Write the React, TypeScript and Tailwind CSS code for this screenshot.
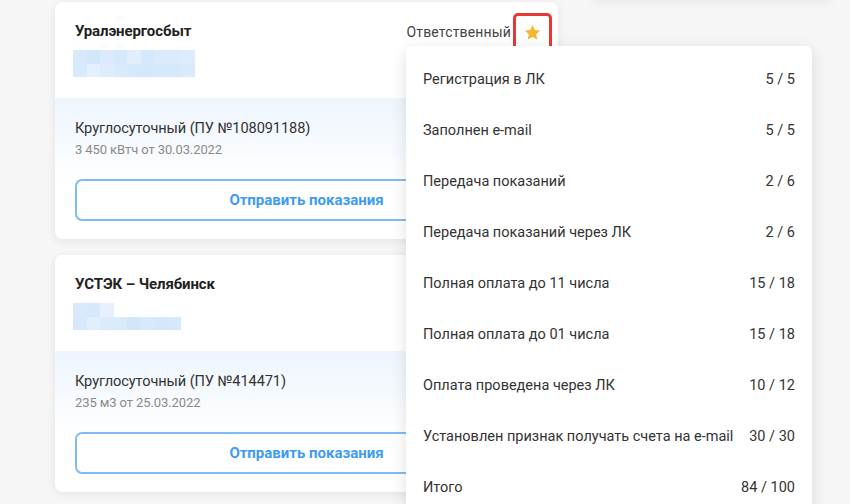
import React from "react";

const rowsCard1Top = ["#d9e9fb", "#d3e7fb", "#dbeafc", "#d6e8fc", "#e1effd", "#d5e8fc", "#dcebfc", "#dcebfc", "#deedfd"];
const rowsCard1Bottom = ["#d8e9fb", "#e3f0fd", "#deecfc", "#d9eafc", "#d5e8fc", "#d4e7fc", "#d5e8fc", "#d6e8fc", "#d9eafc"];
const rowsCard2Top = ["#d9e9fb", "#d6e8fc", "#e6f1fd"];
const rowsCard2Bottom = ["#d6e8fc", "#e1eefd", "#dcebfc", "#d9eafc", "#d2e6fb", "#d9eafc", "#d4e7fc", "#d6e8fc"];

function Pixels({ top, bottom }: { top: string[]; bottom: string[] }) {
  return (
    <div className="flex flex-col">
      <div className="flex">
        {top.map((c, i) => (
          <div key={i} className="w-[13.5px] h-[13.5px]" style={{ background: c }} />
        ))}
      </div>
      <div className="flex">
        {bottom.map((c, i) => (
          <div key={i} className="w-[13.5px] h-[13.5px]" style={{ background: c }} />
        ))}
      </div>
    </div>
  );
}

function Card({
  title,
  top,
  bottom,
  meter,
  reading,
  showResp,
}: {
  title: string;
  top: string[];
  bottom: string[];
  meter: string;
  reading: string;
  showResp?: boolean;
}) {
  return (
    <div className="w-[503px] rounded-[8px] bg-white shadow-[0_2px_10px_rgba(0,0,0,0.08)] overflow-hidden">
      <div className="flex justify-between items-start pl-5 pr-[6px]">
        <div className="pt-[19px] pb-[21px]">
          <div className="text-[15px] leading-5 font-bold text-[#222] tracking-[-0.1px]">{title}</div>
          <div className="mt-[9px] -ml-[2px]">
            <Pixels top={top} bottom={bottom} />
          </div>
        </div>
        {showResp && (
          <div className="pt-[11px] flex items-center gap-[2px]">
            <span className="text-[14px] text-[#444] leading-5 tracking-[0.15px]">Ответственный</span>
            <div className="w-[39px] h-[38px] rounded-[5px] border-[3px] border-[#e53935] flex items-center justify-center">
              <svg width="19" height="19" viewBox="0 0 24 24">
                <path
                  d="M12 2.5l2.9 6.2 6.8.8-5 4.7 1.3 6.7L12 17.6l-6 3.3 1.3-6.7-5-4.7 6.8-.8z"
                  fill="#f5b731"
                />
              </svg>
            </div>
          </div>
        )}
      </div>
      <div className="px-5 pt-5 pb-[18px] bg-gradient-to-b from-[#edf5fd] via-white via-60% to-white">
        <div className="text-[14.6px] leading-5 text-[#333] tracking-[-0.1px]">{meter}</div>
        <div className="mt-[3px] text-[13px] leading-[18px] text-[#8a8a8a] tracking-[-0.1px]">{reading}</div>
        <button className="mt-5 w-full h-[42px] rounded-[7px] border-2 border-[#7ebbf5] bg-white text-[15px] font-bold text-[#3d9bf3]">
          Отправить показания
        </button>
      </div>
    </div>
  );
}

const items: [string, string][] = [
  ["Регистрация в ЛК", "5 / 5"],
  ["Заполнен e-mail", "5 / 5"],
  ["Передача показаний", "2 / 6"],
  ["Передача показаний через ЛК", "2 / 6"],
  ["Полная оплата до 11 числа", "15 / 18"],
  ["Полная оплата до 01 числа", "15 / 18"],
  ["Оплата проведена через ЛК", "10 / 12"],
  ["Установлен признак получать счета на e-mail", "30 / 30"],
  ["Итого", "84 / 100"],
];

export default function App() {
  return (
    <div
      className="relative w-[850px] h-[504px] overflow-hidden bg-[#f6f6f6]"
      style={{ fontFamily: "Roboto, 'Noto Sans', sans-serif" }}
    >
      {/* card above viewport (top right) */}
      <div className="absolute left-[592px] top-[-100px] w-[240px] h-[100px] rounded-[8px] bg-[#f6f6f6] shadow-[0_2px_10px_rgba(0,0,0,0.07)]" />

      <div className="flex flex-col gap-4 pl-[55px] pt-[2px]">
        <Card
          title="Уралэнергосбыт"
          top={rowsCard1Top}
          bottom={rowsCard1Bottom}
          meter="Круглосуточный (ПУ №108091188)"
          reading="3 450 кВтч от 30.03.2022"
          showResp
        />
        <Card
          title="УСТЭК – Челябинск"
          top={rowsCard2Top}
          bottom={rowsCard2Bottom}
          meter="Круглосуточный (ПУ №414471)"
          reading="235 м3 от 25.03.2022"
        />
      </div>

      <div className="absolute left-[406px] top-[46px] w-[406px] h-[480px] rounded-[6px] bg-white shadow-[0_4px_16px_rgba(0,0,0,0.12)] pt-[8px] px-[17px]">
        {items.map(([label, value]) => (
          <div key={label} className="h-[51px] flex items-center justify-between text-[14.5px] text-[#333]">
            <span>{label}</span>
            <span>{value}</span>
          </div>
        ))}
      </div>
    </div>
  );
}
